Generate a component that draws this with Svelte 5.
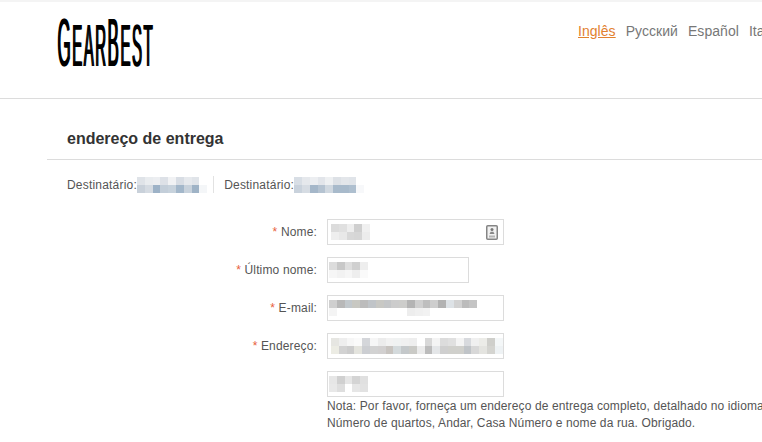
<script>
	const langs = ['Русский', 'Español', 'Italiano'];

	// blurred-out values, one row of grey or blue tones per line
	const dest1 = [
		['#dfe3e8', '#e9ecef', '#eceef1', '#dde1e7', '#f1f2f4', '#d8dde4', '#e6e9ed', '#e0e4e9', '#fff'],
		['#c9d1da', '#d5dbe2', '#9db2c7', '#c3ced9', '#c7d2dc', '#a3b7ca', '#c8d2dc', '#9fb3c6', '#f4f6f8']
	];
	const dest2 = [
		['#d8dee5', '#e5e8ec', '#eceef1', '#e2e5ea', '#eef0f2', '#dde1e6', '#e3e6ea', '#e0e4e9', '#fff'],
		['#c9d2dc', '#d6dce3', '#a5b7c9', '#b5c3d1', '#d0d8e0', '#a8bacb', '#a8bacb', '#aebfcf', '#f7f8fa']
	];
	const fields = [
		{
			label: 'Nome:', w: 177, pad: 3,
			rows: [
				['#dcdcdc', '#e0e0e0', '#eeeeee', '#cfcfcf', '#f0f0f0'],
				['#eeeeee', '#e8e8e8', '#d8d8d8', '#d6d6d6', '#ececec']
			],
			icon: true
		},
		{
			label: 'Último nome:', w: 142, pad: 1,
			rows: [
				['#dcdcdc', '#c8c8c8', '#dedede', '#d0d0d0', '#eeeeee'],
				['#f6f6f6', '#f2f2f2', '#f6f6f6', '#eeeeee', '#fafafa']
			]
		},
		{
			label: 'E-mail:', w: 177, pad: 1,
			rows: [
				['#cfcfcf', '#b8b8b8', '#c2c8cc', '#c8c8c2', '#bcbcbc', '#c0c4c8', '#c8c8c4', '#c4c6c8', '#cccccc', '#cdcdcb', '#b4b4b4', '#cfcfcf', '#bebebe', '#cecece', '#b2b2b2', '#dde2e6', '#d2d2d2', '#bcbcbc', '#c4c4c4'],
				['#f4f4f4', '#fff', '#fff', '#fff', '#fff', '#fff', '#fff', '#fff', '#fff', '#fff', '#ededed', '#f0f0f0', '#f2f2f2', '#fff', '#fff', '#fff', '#fff', '#fff', '#fff']
			]
		},
		{
			label: 'Endereço:', w: 177, pad: 3,
			rows: [
				['#e6e6e2', '#eeeeee', '#f6f6f6', '#fafafa', '#d4d6da', '#f6f6f6', '#ececec', '#f2f2f2', '#f0f2f2', '#f0f0f0', '#eeeeee', '#fff', '#d8d8d8', '#f4f4f4', '#dcdcdc', '#e0e0e0', '#f4f4f4', '#d8dade', '#f0f0f0', '#ecece8', '#cfcfcb', '#f4f7f8'],
				['#ecece4', '#d2d2d2', '#cccccc', '#e4e4de', '#ccced2', '#d2d2d2', '#d2d0d0', '#c8c4c0', '#d4dadc', '#c4c8ca', '#cacac6', '#ebebeb', '#bcbcbc', '#e4e6e8', '#cfcfcf', '#d0d0cc', '#d0d0cc', '#c0c4c8', '#d8d8d8', '#e4e4e0', '#d4d4d0', '#eef2f4']
			]
		},
		{
			label: '', w: 177, pad: 1,
			rows: [
				['#e6e6e6', '#d0d0d0', '#e6e6e6', '#d4d4d4', '#e0e0e0'],
				['#e8e8e8', '#dedede', '#fff', '#e6e6e6', '#e2e2e2']
			]
		}
	];
</script>

<div class="page">
	<header class="top">
		<div class="logo"><span class="logo-text"><b class="big">G</b><b>EAR</b><b class="big">B</b><b>EST</b></span></div>
		<nav class="langs">
			<a class="active" href="#en">Inglês</a>
			{#each langs as lang}
				<a href="#{lang}">{lang}</a>
			{/each}
		</nav>
	</header>

	<section class="shipping">
		<h2>endereço de entrega</h2>

		<div class="recipients">
			<div class="recipient">
				<span>Destinatário:</span>
				<div class="mosaic">
					{#each dest1 as row}
						<div class="mosaic-row">
							{#each row as c}<i style="background:{c}"></i>{/each}
						</div>
					{/each}
				</div>
			</div>
			<div class="recipient second">
				<span>Destinatário:</span>
				<div class="mosaic">
					{#each dest2 as row}
						<div class="mosaic-row">
							{#each row as c}<i style="background:{c}"></i>{/each}
						</div>
					{/each}
				</div>
			</div>
		</div>

		<div class="form">
			{#each fields as f}
				<div class="row">
					<div class="label">
						{#if f.label}<em>*</em> {f.label}{/if}
					</div>
					<div class="box" style="width:{f.w}px;padding-left:{f.pad}px">
						<div class="mosaic">
							{#each f.rows as row}
								<div class="mosaic-row">
									{#each row as c}<i style="background:{c}"></i>{/each}
								</div>
							{/each}
						</div>
						{#if f.icon}
							<svg class="contact" width="12" height="15" viewBox="0 0 12 15">
								<rect x="0.75" y="0.75" width="10.5" height="13.5" rx="1" fill="#f1f1f1" stroke="#858585" stroke-width="1.5" />
								<circle cx="6" cy="4.6" r="1.5" fill="#777" />
								<path d="M3.5 9 L4.6 6.8 H7.4 L8.5 9 Z" fill="#888" />
								<path d="M3 10.5h6v2H3z" fill="#b5b5b5" />
							</svg>
						{/if}
					</div>
				</div>
			{/each}
			<p class="note">
				Nota: Por favor, forneça um endereço de entrega completo, detalhado no idioma local.<br />
				Número de quartos, Andar, Casa Número e nome da rua. Obrigado.
			</p>
		</div>
	</section>
</div>

<style>
	:global(html), :global(body) {
		overflow: hidden;
		background: #fff;
	}

	.page {
		width: 762px;
		height: 442px;
		overflow: hidden;
		font-family: "Liberation Sans", Arial, sans-serif;
		font-size: 12px;
		color: #555;
	}

	.top {
		display: flex;
		box-sizing: border-box;
		height: 99px;
		padding-left: 57px;
		border-top: 2px solid #f4f4f4;
		border-bottom: 1px solid #dcdcdc;
	}

	.logo {
		width: 521px;
		flex: none;
		padding-top: 10px;
		color: #000;
	}

	.logo-text {
		display: inline-block;
		white-space: nowrap;
		line-height: 60px;
		font-size: 60px;
		transform: scaleX(0.25);
		transform-origin: left center;
		letter-spacing: 6px;
		text-shadow: 4px 0 #000;
	}

	.logo-text b {
		font-weight: normal;
	}

	.logo-text .big {
		font-size: 68px;
	}

	.langs {
		display: flex;
		gap: 10px;
		flex: none;
		padding-top: 21px;
		font-size: 14px;
		line-height: 16px;
		letter-spacing: 0.05px;
	}

	.langs a {
		color: #777;
		text-decoration: none;
		white-space: nowrap;
	}

	.langs a.active {
		color: #e2812f;
		text-decoration: underline;
	}

	.shipping {
		margin-left: 47px;
	}

	h2 {
		margin: 0;
		height: 61px;
		box-sizing: border-box;
		padding: 31px 0 0 20px;
		border-bottom: 1px solid #dcdcdc;
		font-size: 16px;
		line-height: 18px;
		font-weight: bold;
		color: #333;
	}

	.recipients {
		display: flex;
		padding: 16px 0 0 20px;
		height: 17px;
	}

	.recipient {
		display: flex;
		align-items: center;
		line-height: 17px;
		letter-spacing: 0.2px;
	}

	.recipient span {
		padding-top: 2px;
	}

	.recipient.second {
		margin-left: 6px;
		padding-left: 10px;
		border-left: 1px solid #e2e2e2;
	}

	.mosaic {
		flex: none;
	}

	.mosaic-row {
		display: flex;
	}

	.mosaic-row i {
		display: block;
		width: 7.8px;
		height: 8px;
	}

	.form {
		margin-top: 26px;
	}

	.row {
		display: flex;
		margin-bottom: 12px;
	}

	.label {
		flex: none;
		width: 270px;
		margin-right: 10px;
		text-align: right;
		line-height: 26px;
		letter-spacing: 0.15px;
		color: #555;
	}

	.label em {
		font-style: normal;
		color: #e8603c;
	}

	.box {
		display: flex;
		align-items: center;
		justify-content: space-between;
		box-sizing: border-box;
		height: 26px;
		padding-right: 5px;
		border: 1px solid #dcdcdc;
	}

	.contact {
		flex: none;
	}

	.note {
		margin: -11px 0 0 280px;
		line-height: 17px;
		letter-spacing: 0.12px;
		white-space: nowrap;
		color: #555;
	}
</style>
